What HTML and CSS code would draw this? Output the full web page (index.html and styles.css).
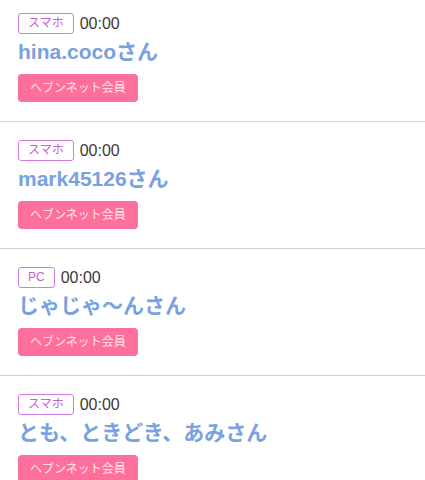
FILE: index.html
```html
<!DOCTYPE html>
<html lang="ja">
<head>
  <meta charset="UTF-8" />
  <meta name="viewport" content="width=device-width, initial-scale=1.0"/>
  <title>足あと一覧</title>
  <link rel="stylesheet" href="styles.css">
</head>
<body>
  <ul class="visitors">
    <li class="visitor">
      <div class="meta"><span class="device">スマホ</span><span class="time">00:00</span></div>
      <div class="name">hina.cocoさん</div>
      <span class="member">ヘブンネット会員</span>
    </li>
    <li class="visitor">
      <div class="meta"><span class="device">スマホ</span><span class="time">00:00</span></div>
      <div class="name">mark45126さん</div>
      <span class="member">ヘブンネット会員</span>
    </li>
    <li class="visitor">
      <div class="meta"><span class="device">PC</span><span class="time">00:00</span></div>
      <div class="name">じゃじゃ〜んさん</div>
      <span class="member">ヘブンネット会員</span>
    </li>
    <li class="visitor">
      <div class="meta"><span class="device">スマホ</span><span class="time">00:00</span></div>
      <div class="name">とも、ときどき、あみさん</div>
      <span class="member">ヘブンネット会員</span>
    </li>
  </ul>
</body>
</html>
```

FILE: styles.css
```css
* {
  box-sizing: border-box;
  font-family: 'Liberation Sans', 'Noto Sans CJK JP', sans-serif;
}

body {
  background: #fff;
  margin: 0;
  padding: 0;
}

.visitors {
  list-style: none;
  margin: 0;
  padding: 0;
}

.visitor {
  padding: 18px 18px 19px;
  border-bottom: 1px solid #cfcfcf;
  display: flex;
  flex-direction: column;
  align-items: flex-start;
}

.visitor:first-child {
  padding-top: 13px;
}

.meta {
  display: flex;
  align-items: center;
  gap: 6px;
  height: 21px;
}

.device {
  border: 1px solid #d57be6;
  color: #c65fd8;
  border-radius: 3px;
  font-size: 12px;
  line-height: 19px;
  padding: 0 9px;
}

.time {
  font-size: 16px;
  color: #3a3a3a;
}

.name {
  color: #79a1e1;
  font-size: 21px;
  font-weight: bold;
  line-height: 24px;
  margin: 6px 0 10px;
}

.member {
  background: #ff6f9b;
  color: #ffe3ec;
  font-size: 12px;
  line-height: 28px;
  padding: 0 12px;
  border-radius: 4px;
}
```
